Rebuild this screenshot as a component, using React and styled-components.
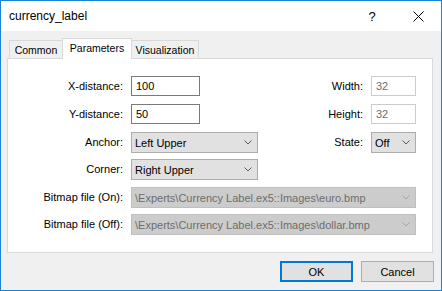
import React from "react"
import styled, { createGlobalStyle, css } from "styled-components"

const GlobalStyle = createGlobalStyle`
    html, body {
        margin: 0;
        padding: 0;
        background: #ffffff;
    }
    * {
        box-sizing: border-box;
    }
`

const Window = styled.div`
    width: 442px;
    height: 291px;
    border: 1px solid #1883d7;
    background-color: #f0f0f0;
    display: flex;
    flex-direction: column;
    font-family: "Liberation Sans", Arial, sans-serif;
    font-size: 11px;
    color: #000;
`
const TitleBar = styled.div`
    height: 30px;
    background-color: #ffffff;
    display: flex;
    align-items: center;
    padding-left: 8px;
    flex-shrink: 0;
`
const Title = styled.div`
    flex: 1;
    font-size: 12px;
    font-family: "Segoe UI", "Liberation Sans", Arial, sans-serif;
    padding-bottom: 1px;
`
const TitleButton = styled.div`
    width: 46px;
    height: 30px;
    display: flex;
    align-items: center;
    justify-content: center;
    font-size: 13px;
`
const Body = styled.div`
    flex: 1;
    display: flex;
    flex-direction: column;
    padding: 7px 8px 0 6px;
`
const TabStrip = styled.div`
    display: flex;
    align-items: flex-end;
    height: 20px;
    padding-left: 2px;
    position: relative;
    z-index: 1;
`
const Tab = styled.div`
    width: ${({ $w }) => $w}px;
    height: 18px;
    border: 1px solid #d9d9d9;
    border-bottom: none;
    background-color: #f0f0f0;
    display: flex;
    align-items: center;
    justify-content: center;
    white-space: nowrap;
    font-size: 10.5px;
    margin-left: -1px;
    &:first-child {
        margin-left: 0;
    }
    ${({ $active }) => $active && css`
        height: 21px;
        margin-bottom: -1px;
        background-color: #ffffff;
        padding-bottom: 3px;
    `}
`
const Panel = styled.div`
    height: 195px;
    background-color: #ffffff;
    border: 1px solid #d9d9d9;
    display: grid;
    grid-template-columns: 115px 127px 1fr auto 45px;
    grid-template-rows: 28px 28px 27px 28px 27px 21px;
    column-gap: 8px;
    align-items: start;
    align-content: start;
    padding: 17px 16px 0 0;
`
const Label = styled.div`
    text-align: right;
    line-height: ${({ $h }) => $h || 20}px;
    white-space: nowrap;
    grid-column: ${({ $col }) => $col || 1};
`
const TextBox = styled.div`
    height: 20px;
    width: ${({ $w }) => $w}px;
    border: 1px solid ${({ $disabled }) => ($disabled ? "#cccccc" : "#7a7a7a")};
    background-color: #ffffff;
    color: ${({ $disabled }) => ($disabled ? "#6d6d6d" : "#000")};
    padding-left: 4px;
    line-height: 18px;
    grid-column: ${({ $col }) => $col};
`
const Select = styled.div`
    height: 21px;
    border: 1px solid #adadad;
    background-color: #e1e1e1;
    display: flex;
    align-items: center;
    justify-content: space-between;
    padding: 0 5px 0 3px;
    grid-column: ${({ $col }) => $col};
    white-space: nowrap;
    ${({ $disabled }) => $disabled && css`
        border-color: #bfbfbf;
        background-color: #cccccc;
        color: #6d6d6d;
    `}
`
const Footer = styled.div`
    display: flex;
    justify-content: flex-end;
    gap: 8px;
    padding: 8px 0 0 0;
    margin-right: -1px;
`
const Button = styled.div`
    width: 73px;
    height: 21px;
    background-color: #e1e1e1;
    border: 1px solid #adadad;
    display: flex;
    align-items: center;
    justify-content: center;
    ${({ $default }) => $default && css`
        border: 2px solid #0078d7;
    `}
`

const Chevron = ({ disabled }) => (
    <svg width="8" height="5" viewBox="0 0 8 5">
        <polyline points="0.5,0.5 4,4 7.5,0.5" fill="none" stroke={disabled ? "#a6a6a6" : "#5a5a5a"} strokeWidth="1" />
    </svg>
)

const Close = () => (
    <svg width="11" height="11" viewBox="0 0 11 11">
        <path d="M0.5 0.5 L10.5 10.5 M10.5 0.5 L0.5 10.5" stroke="#000" strokeWidth="1" />
    </svg>
)

const App = () => {
    return <>
        <GlobalStyle />
        <Window>
            <TitleBar>
                <Title>currency_label</Title>
                <TitleButton>?</TitleButton>
                <TitleButton><Close /></TitleButton>
            </TitleBar>
            <Body>
                <TabStrip>
                    <Tab $w={54}>Common</Tab>
                    <Tab $w={70} $active>Parameters</Tab>
                    <Tab $w={68}>Visualization</Tab>
                </TabStrip>
                <Panel>
                    <Label>X-distance:</Label>
                    <TextBox $col={2} $w={69}>100</TextBox>
                    <Label $col={4}>Width:</Label>
                    <TextBox $col={5} $w={45} $disabled>32</TextBox>

                    <Label>Y-distance:</Label>
                    <TextBox $col={2} $w={69}>50</TextBox>
                    <Label $col={4}>Height:</Label>
                    <TextBox $col={5} $w={45} $disabled>32</TextBox>

                    <Label $h={21}>Anchor:</Label>
                    <Select $col={2}>Left Upper<Chevron /></Select>
                    <Label $col={4} $h={21}>State:</Label>
                    <Select $col={5}>Off<Chevron /></Select>

                    <Label $h={21}>Corner:</Label>
                    <Select $col={2}>Right Upper<Chevron /></Select>

                    <Label $h={21}>Bitmap file (On):</Label>
                    <Select $col="2 / 6" $disabled>\Experts\Currency Label.ex5::Images\euro.bmp<Chevron disabled /></Select>

                    <Label $h={21}>Bitmap file (Off):</Label>
                    <Select $col="2 / 6" $disabled>\Experts\Currency Label.ex5::Images\dollar.bmp<Chevron disabled /></Select>
                </Panel>
                <Footer>
                    <Button $default>OK</Button>
                    <Button>Cancel</Button>
                </Footer>
            </Body>
        </Window>
    </>
}

export default App
